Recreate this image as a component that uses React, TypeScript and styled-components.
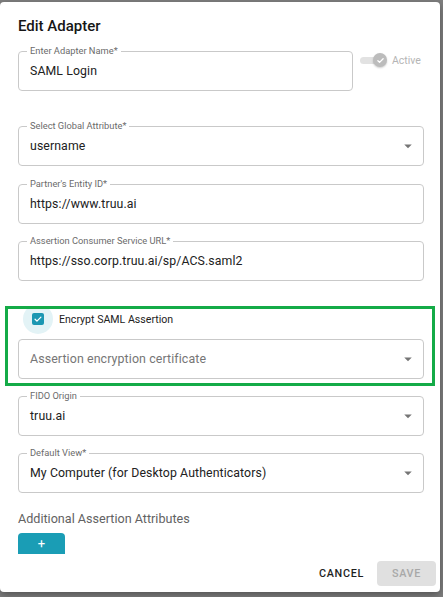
import React from "react";
import styled, { createGlobalStyle } from "styled-components";

const GlobalStyle = createGlobalStyle`
  html, body {
    margin: 0;
    padding: 0;
  }
  body {
    background: #7f7f7f;
    font-family: Roboto, "Liberation Sans", Arial, sans-serif;
    -webkit-font-smoothing: antialiased;
  }
`;

type FieldProps = {
  label?: string;
  value: string;
  select?: boolean;
  placeholder?: boolean;
  gap?: number;
  width?: number;
};

const Field = ({ label, value, select, placeholder, gap = 0, width }: FieldProps) => (
  <Fieldset $gap={gap} $width={width}>
    {label && <Legend>{label}</Legend>}
    <Inner $labelled={!!label}>
      <Value $placeholder={placeholder}>{value}</Value>
      {select && (
        <Arrow viewBox="0 0 24 24">
          <path d="M7 10l5 5 5-5z" />
        </Arrow>
      )}
    </Inner>
  </Fieldset>
);

const App = () => {
  return (
    <Page>
      <GlobalStyle />
      <Dialog>
        <Title>Edit Adapter</Title>
        <Content>
          <TopRow>
            <Field label="Enter Adapter Name*" value="SAML Login" width={335} />
            <Toggle>
              <Switch>
                <Track />
                <Thumb>
                  <svg width="9" height="9" viewBox="0 0 24 24" fill="none" stroke="#fff" strokeWidth="3.5" strokeLinecap="round" strokeLinejoin="round">
                    <path d="M5 12.5l4.5 4.5L19 7.5" />
                  </svg>
                </Thumb>
              </Switch>
              <ToggleLabel>Active</ToggleLabel>
            </Toggle>
          </TopRow>
          <Field label="Select Global Attribute*" value="username" select gap={30} />
          <Field label="Partner's Entity ID*" value="https://www.truu.ai" gap={13} />
          <Field label="Assertion Consumer Service URL*" value="https://sso.corp.truu.ai/sp/ACS.saml2" gap={12} />

          <Highlight>
            <CheckRow>
              <Halo>
                <CheckBox>
                  <svg width="10" height="10" viewBox="0 0 24 24" fill="none" stroke="#fff" strokeWidth="3" strokeLinecap="round" strokeLinejoin="round">
                    <path d="M5 12.5l4.5 4.5L19 7.5" />
                  </svg>
                </CheckBox>
              </Halo>
              <CheckLabel>Encrypt SAML Assertion</CheckLabel>
            </CheckRow>
            <Field value="Assertion encryption certificate" placeholder select gap={10} />
          </Highlight>

          <Field label="FIDO Origin" value="truu.ai" select gap={5} />
          <Field label="Default View*" value="My Computer (for Desktop Authenticators)" select gap={12} />

          <SectionTitle>Additional Assertion Attributes</SectionTitle>
          <AddButton>+</AddButton>
        </Content>
        <Actions>
          <CancelButton>Cancel</CancelButton>
          <SaveButton disabled>Save</SaveButton>
        </Actions>
      </Dialog>
    </Page>
  );
};

export default App;

const Page = styled.div`
  width: 443px;
  height: 597px;
  padding-top: 2px;
  box-sizing: border-box;
  overflow: hidden;
`;

const Dialog = styled.div`
  width: 440px;
  height: 590px;
  background: #fff;
  border-radius: 4px;
  display: flex;
  flex-direction: column;
  overflow: hidden;
  box-shadow: 0 3px 8px rgba(0, 0, 0, 0.35);
`;

const Title = styled.h2`
  margin: 0;
  padding: 14px 18px 0;
  height: 34px;
  box-sizing: border-box;
  font-size: 15px;
  font-weight: 500;
  line-height: 20px;
  color: #161616;
`;

const Content = styled.div`
  flex: 1;
  overflow: hidden;
  padding: 10px 16px 0 18px;
`;

const Fieldset = styled.fieldset<{ $gap: number; $width?: number }>`
  margin: ${(p) => p.$gap}px 0 0;
  padding: 0 6px 0 11px;
  width: ${(p) => (p.$width ? `${p.$width}px` : "auto")};
  flex: none;
  box-sizing: border-box;
  border: 1px solid #c9c9c9;
  border-radius: 4px;
  min-width: 0;
`;

const Legend = styled.legend`
  margin-left: -3px;
  padding: 0 3px;
  font-size: 9.3px;
  line-height: 10px;
  color: #6b6b6b;
`;

const Inner = styled.div<{ $labelled: boolean }>`
  display: flex;
  align-items: center;
  height: ${(p) => (p.$labelled ? 34 : 38)}px;
  padding-bottom: ${(p) => (p.$labelled ? 4 : 0)}px;
  box-sizing: border-box;
`;

const Value = styled.div<{ $placeholder?: boolean }>`
  flex: 1;
  white-space: nowrap;
  font-size: ${(p) => (p.$placeholder ? 12.4 : 12.3)}px;
  line-height: 16px;
  letter-spacing: 0.1px;
  color: ${(p) => (p.$placeholder ? "#767676" : "#212121")};
`;

const Arrow = styled.svg`
  width: 18px;
  height: 18px;
  flex: none;
  fill: #757575;
`;

const TopRow = styled.div`
  display: flex;
  align-items: flex-start;
`;

const Toggle = styled.div`
  display: flex;
  align-items: center;
  gap: 5px;
  margin: 7px 0 0 7px;
`;

const Switch = styled.div`
  position: relative;
  width: 27px;
  height: 14px;
`;

const Track = styled.div`
  position: absolute;
  left: 0;
  top: 3.5px;
  width: 20px;
  height: 7px;
  border-radius: 4px;
  background: #e2e2e2;
`;

const Thumb = styled.div`
  position: absolute;
  right: 0;
  top: 0;
  width: 14px;
  height: 14px;
  border-radius: 50%;
  background: #bcbcbc;
  display: flex;
  align-items: center;
  justify-content: center;
  box-shadow: 0 1px 2px rgba(0, 0, 0, 0.2);
`;

const ToggleLabel = styled.span`
  font-size: 10.5px;
  color: #b5b5b5;
`;

const Highlight = styled.div`
  margin: 25px -11px 0 -13px;
  padding: 0 8px 4px 10px;
  border: 3px solid #14ab47;
  overflow: hidden;
`;

const CheckRow = styled.div`
  display: flex;
  align-items: center;
  height: 20px;
`;

const Halo = styled.div`
  width: 30px;
  height: 30px;
  margin: -5px 0 -5px 5px;
  flex: none;
  border-radius: 50%;
  background: rgba(27, 154, 179, 0.12);
  display: flex;
  align-items: center;
  justify-content: center;
`;

const CheckBox = styled.div`
  width: 12px;
  height: 12px;
  border-radius: 2px;
  background: #1b97b2;
  display: flex;
  align-items: center;
  justify-content: center;
`;

const CheckLabel = styled.span`
  margin-left: 6px;
  font-size: 10.6px;
  color: #222;
`;

const SectionTitle = styled.div`
  margin-top: 18px;
  font-size: 12.6px;
  line-height: 16px;
  color: #626262;
`;

const AddButton = styled.button`
  margin-top: 6px;
  width: 47px;
  height: 28px;
  padding: 3px 0 0;
  border: none;
  border-radius: 4px;
  background: #1a9db5;
  color: #fff;
  font-family: inherit;
  font-size: 13px;
  line-height: 16px;
  box-sizing: border-box;
  display: flex;
  justify-content: center;
  align-items: flex-start;
`;

const Actions = styled.div`
  height: 38px;
  flex: none;
  display: flex;
  justify-content: flex-end;
  align-items: center;
  gap: 7px;
  padding-right: 4px;
`;

const CancelButton = styled.button`
  border: none;
  background: none;
  padding: 6px;
  font-family: inherit;
  font-size: 10.8px;
  font-weight: 500;
  letter-spacing: 0.7px;
  text-transform: uppercase;
  color: #1f1f1f;
`;

const SaveButton = styled.button`
  width: 59px;
  height: 25px;
  border: none;
  border-radius: 4px;
  background: #e0e0e0;
  font-family: inherit;
  font-size: 10.8px;
  font-weight: 500;
  letter-spacing: 0.7px;
  text-transform: uppercase;
  color: #a8a8a8;
`;
